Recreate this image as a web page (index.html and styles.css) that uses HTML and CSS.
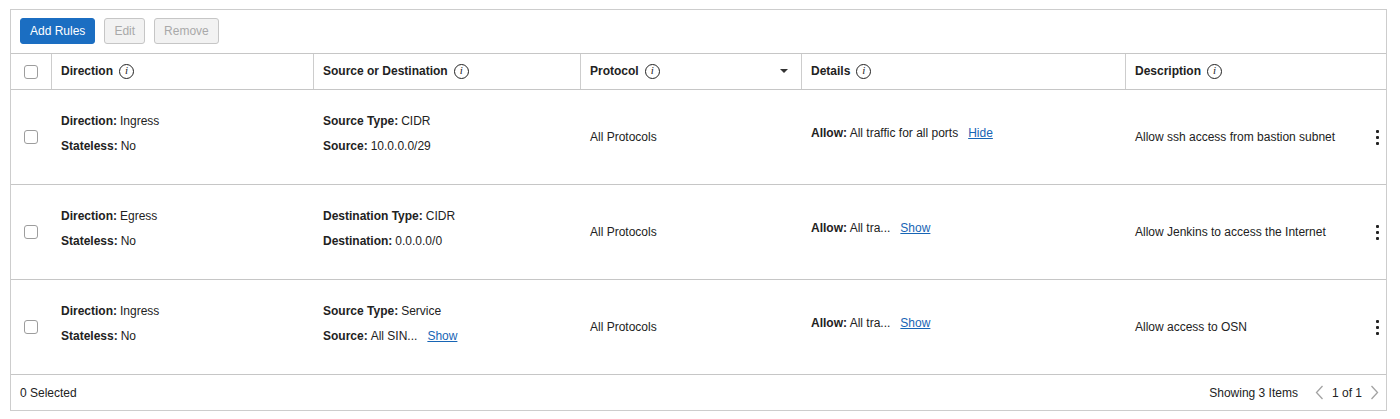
FILE: index.html
```html
<!DOCTYPE html>
<html lang="en">
<head>
<meta charset="utf-8">
<title>Security Rules</title>
<link rel="stylesheet" href="styles.css">
</head>
<body>
<div class="panel">
  <div class="toolbar">
    <button class="btn btn-primary">Add Rules</button>
    <button class="btn btn-disabled">Edit</button>
    <button class="btn btn-disabled">Remove</button>
  </div>

  <div class="grid-row head">
    <div class="cell cb-cell"><span class="checkbox"></span></div>
    <div class="cell hcell">Direction <span class="info">i</span></div>
    <div class="cell hcell">Source or Destination <span class="info">i</span></div>
    <div class="cell hcell hsort"><span class="htext">Protocol <span class="info">i</span></span><span class="caret"></span></div>
    <div class="cell hcell">Details <span class="info">i</span></div>
    <div class="cell hcell">Description <span class="info">i</span></div>
  </div>

  <div class="grid-row body">
    <div class="cell cb-cell"><span class="checkbox"></span></div>
    <div class="cell stack">
      <div class="line"><b>Direction:</b> Ingress</div>
      <div class="line"><b>Stateless:</b> No</div>
    </div>
    <div class="cell stack">
      <div class="line"><b>Source Type:</b> CIDR</div>
      <div class="line"><b>Source:</b> 10.0.0.0/29</div>
    </div>
    <div class="cell">All Protocols</div>
    <div class="cell raised"><span><b>Allow:</b> All traffic for all ports</span><a class="link" href="#">Hide</a></div>
    <div class="cell desc"><span>Allow ssh access from bastion subnet</span><span class="kebab"><i></i><i></i><i></i></span></div>
  </div>

  <div class="grid-row body">
    <div class="cell cb-cell"><span class="checkbox"></span></div>
    <div class="cell stack">
      <div class="line"><b>Direction:</b> Egress</div>
      <div class="line"><b>Stateless:</b> No</div>
    </div>
    <div class="cell stack">
      <div class="line"><b>Destination Type:</b> CIDR</div>
      <div class="line"><b>Destination:</b> 0.0.0.0/0</div>
    </div>
    <div class="cell">All Protocols</div>
    <div class="cell raised"><span><b>Allow:</b> All tra...</span><a class="link" href="#">Show</a></div>
    <div class="cell desc"><span>Allow Jenkins to access the Internet</span><span class="kebab"><i></i><i></i><i></i></span></div>
  </div>

  <div class="grid-row body">
    <div class="cell cb-cell"><span class="checkbox"></span></div>
    <div class="cell stack">
      <div class="line"><b>Direction:</b> Ingress</div>
      <div class="line"><b>Stateless:</b> No</div>
    </div>
    <div class="cell stack">
      <div class="line"><b>Source Type:</b> Service</div>
      <div class="line"><b>Source:</b> All SIN...<a class="link" href="#">Show</a></div>
    </div>
    <div class="cell">All Protocols</div>
    <div class="cell raised"><span><b>Allow:</b> All tra...</span><a class="link" href="#">Show</a></div>
    <div class="cell desc"><span>Allow access to OSN</span><span class="kebab"><i></i><i></i><i></i></span></div>
  </div>

  <div class="footer">
    <span>0 Selected</span>
    <div class="pager">
      <span class="count">Showing 3 Items</span>
      <svg class="chev" width="9" height="15" viewBox="0 0 9 15"><polyline points="7.5,1 1.5,7.5 7.5,14" fill="none" stroke="#a3a3a3" stroke-width="1.3"/></svg>
      <span>1 of 1</span>
      <svg class="chev" width="9" height="15" viewBox="0 0 9 15"><polyline points="1.5,1 7.5,7.5 1.5,14" fill="none" stroke="#a3a3a3" stroke-width="1.3"/></svg>
    </div>
  </div>
</div>
</body>
</html>
```

FILE: styles.css
```css
* { box-sizing: border-box; }

html, body {
  margin: 0;
  padding: 0;
  background: #ffffff;
}

body {
  font-family: "Liberation Sans", Arial, sans-serif;
  font-size: 12px;
  color: #222222;
}

.panel {
  margin: 9px 0 0 10px;
  width: 1377px;
  border: 1px solid #cdcdcd;
  background: #ffffff;
}

.toolbar {
  display: flex;
  gap: 9px;
  padding: 8px 9px 9px;
  border-bottom: 1px solid #c6c6c6;
}

.btn {
  height: 26px;
  padding: 0 9px;
  border-radius: 3px;
  font-family: "Liberation Sans", Arial, sans-serif;
  font-size: 12px;
  line-height: 24px;
  cursor: default;
}

.btn-primary {
  background: #1b6ec2;
  border: 1px solid #1b6ec2;
  color: #ffffff;
}

.btn-disabled {
  background: #f2f2f2;
  border: 1px solid #c6c6c6;
  color: #a9a9a9;
}

.grid-row {
  display: grid;
  grid-template-columns: 40px 262px 267px 221px 324px 1fr;
}

.head {
  height: 36px;
  border-bottom: 1px solid #c6c6c6;
}

.body {
  height: 95px;
  border-bottom: 1px solid #c6c6c6;
}

.cell {
  display: flex;
  align-items: center;
  padding: 0 9px 0 10px;
}

.hcell {
  border-left: 1px solid #cdcdcd;
  padding-left: 9px;
  padding-bottom: 1px;
  font-weight: bold;
  gap: 6px;
}

.hsort {
  justify-content: space-between;
  padding-right: 13px;
}

.htext {
  display: flex;
  align-items: center;
  gap: 6px;
}

.caret {
  width: 0;
  height: 0;
  border-left: 4px solid transparent;
  border-right: 4px solid transparent;
  border-top: 4px solid #333333;
}

.info {
  display: inline-flex;
  align-items: center;
  justify-content: center;
  width: 15px;
  height: 15px;
  border: 1.3px solid #222222;
  border-radius: 50%;
  font-family: "Liberation Serif", "Times New Roman", serif;
  font-style: italic;
  font-weight: normal;
  font-size: 11px;
  line-height: 1;
  padding-bottom: 1px;
}

.cb-cell {
  padding: 0 0 0 13px;
}

.checkbox {
  display: block;
  width: 14px;
  height: 14px;
  border: 1px solid #9d9d9d;
  border-radius: 3px;
  background: #ffffff;
}

.stack {
  flex-direction: column;
  align-items: flex-start;
  justify-content: center;
  gap: 9px;
  padding-bottom: 7px;
}

.line {
  line-height: 16px;
  display: flex;
  align-items: baseline;
}

.line b {
  margin-right: 3px;
}

.raised {
  padding-bottom: 8px;
}

.link {
  color: #1765b5;
  text-decoration: underline;
  margin-left: 10px;
}

.desc {
  justify-content: space-between;
  padding-right: 7px;
}

.kebab {
  display: flex;
  flex-direction: column;
  gap: 3px;
}

.kebab i {
  display: block;
  width: 3px;
  height: 3px;
  border-radius: 1px;
  background: #222222;
}

.footer {
  height: 35px;
  display: flex;
  align-items: center;
  justify-content: space-between;
  padding: 0 7px 0 9px;
}

.pager {
  display: flex;
  align-items: center;
  gap: 8px;
}

.count {
  margin-right: 9px;
}

.chev {
  display: block;
}
```
